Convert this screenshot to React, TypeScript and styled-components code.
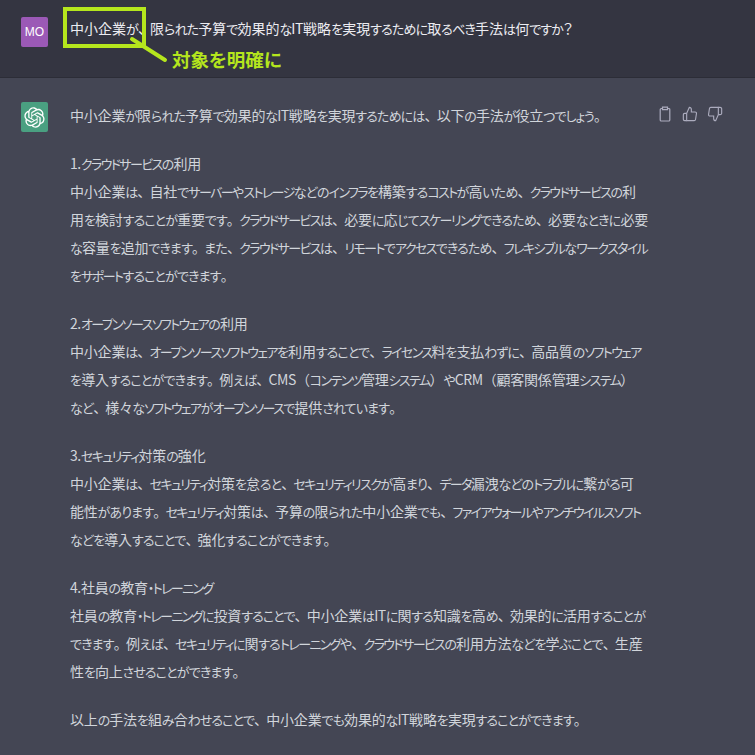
import React from "react";
import styled, { createGlobalStyle } from "styled-components";

const Global = createGlobalStyle`
  html, body { margin: 0; padding: 0; background: #444654; }
  body { width: 755px; height: 755px; overflow: hidden; font-family: "Noto Sans CJK JP", "Noto Sans", sans-serif; font-feature-settings: "palt"; }
`;
const Page = styled.div`
  width: 755px;
  height: 755px;
  overflow: hidden;
  background: #444654;
`;
const Question = styled.header`
  position: relative;
  box-sizing: border-box;
  height: 78px;
  padding: 16px 0 0 21px;
  display: flex;
  gap: 22px;
  background: #343541;
  border-bottom: 1px solid #2c2d37;
`;
const Avatar = styled.div<{ $bg: string }>`
  width: 27px;
  height: 30px;
  flex: none;
  margin-top: 1px;
  border-radius: 2px;
  background: ${(p) => p.$bg};
  color: #fff;
  display: flex;
  align-items: center;
  justify-content: center;
  font: 12px "Liberation Sans", sans-serif;
`;
const QuestionText = styled.div`
  --han-gap: 0px;
  color: #ececf1;
  font-size: 14px;
  line-height: 24px;
  white-space: nowrap;
`;
const Highlight = styled.div`
  position: absolute;
  left: 63px;
  top: 7px;
  width: 83px;
  height: 41px;
  box-sizing: border-box;
  border: 4px solid #b5e61d;
`;
const Leader = styled.svg`
  position: absolute;
  left: 125px;
  top: 30px;
`;
const Note = styled.div`
  position: absolute;
  left: 172px;
  top: 46px;
  color: #b5e61d;
  font-size: 18.5px;
  line-height: 26px;
  font-weight: 700;
  white-space: nowrap;
`;
const Answer = styled.section`
  display: flex;
  padding: 23px 0 0 21px;
  gap: 22px;
`;
const Body = styled.div`
  width: 590px;
  flex: none;
  display: flex;
  flex-direction: column;
  gap: 20px;
`;
const Para = styled.div`
  color: #d1d5db;
  font-size: 14px;
  line-height: 28px;
`;
const Line = styled.div`
  height: 28px;
  white-space: nowrap;
`;
const Run = styled.span<{ $kind: string }>`
  line-height: 0;
  ${(p) => p.$kind === "kata" && "font-size: 13px; letter-spacing: -1.6px;"}
  ${(p) => p.$kind === "hira" && "font-size: 13px; letter-spacing: -0.85px;"}
  ${(p) => p.$kind === "latin" && "letter-spacing: -0.4px;"}
  ${(p) => p.$kind === "han" && "letter-spacing: var(--han-gap, -0.2px);"}
  ${(p) => p.$kind === "punct" && "font-feature-settings: normal; letter-spacing: -1.8px;"}
  ${(p) => p.$kind === "paren" && "font-feature-settings: normal; letter-spacing: -0.2px;"}
`;
const Actions = styled.div`
  display: flex;
  gap: 9px;
  margin: 0 0 0 -25px;
  padding-top: 5px;
  color: #acacbe;
`;

const kindOf = (c: string) => {
  if (/[\u30a0-\u30ff]/.test(c)) return "kata";
  if (/[\u3040-\u309f]/.test(c)) return "hira";
  if (/[、。]/.test(c)) return "punct";
  if (/[（）]/.test(c)) return "paren";
  if (/[A-Za-z0-9.]/.test(c)) return "latin";
  return "han";
};
const toRuns = (text: string) => {
  const runs: { kind: string; text: string }[] = [];
  for (const c of text) {
    const k = kindOf(c);
    const last = runs[runs.length - 1];
    if (last && last.kind === k) last.text += c;
    else runs.push({ kind: k, text: c });
  }
  return runs;
};
const Spaced = ({ text }: { text: string }) => (
  <>
    {toRuns(text).map((r, i) => (
      <Run key={i} $kind={r.kind}>{r.text}</Run>
    ))}
  </>
);

const Logo = () => (
  <svg width="21" height="21" viewBox="0 0 41 41" fill="#fff">
    <path d="M37.5324 16.8707C37.9808 15.5241 38.1363 14.0974 37.9886 12.6859C37.8409 11.2744 37.3934 9.91076 36.676 8.68622C35.6126 6.83404 33.9882 5.3676 32.0373 4.4985C30.0864 3.62941 27.9098 3.40259 25.8215 3.85078C24.8796 2.7893 23.7219 1.94125 22.4257 1.36341C21.1295 0.785575 19.7249 0.491269 18.3058 0.500197C16.1708 0.495044 14.0893 1.16803 12.3614 2.42214C10.6335 3.67624 9.34853 5.44666 8.6917 7.47815C7.30085 7.76286 5.98686 8.3414 4.8377 9.17505C3.68854 10.0087 2.73073 11.0782 2.02839 12.312C0.956464 14.1591 0.498905 16.2988 0.721698 18.4228C0.944492 20.5467 1.83612 22.5449 3.268 24.1293C2.81966 25.4759 2.66413 26.9026 2.81182 28.3141C2.95951 29.7256 3.40701 31.0892 4.12437 32.3138C5.18791 34.1659 6.8123 35.6322 8.76321 36.5013C10.7141 37.3704 12.8907 37.5973 14.9789 37.1492C15.9208 38.2107 17.0786 39.0587 18.3747 39.6366C19.6709 40.2144 21.0755 40.5087 22.4946 40.4998C24.6307 40.5054 26.7133 39.8321 28.4418 38.5772C30.1704 37.3223 31.4556 35.5506 32.1119 33.5179C33.5027 33.2332 34.8167 32.6547 35.9659 31.821C37.115 30.9874 38.0728 29.9178 38.7752 28.684C39.8458 26.8371 40.3023 24.6979 40.0789 22.5748C39.8556 20.4517 38.9639 18.4544 37.5324 16.8707ZM22.4978 37.8849C20.7443 37.8874 19.0459 37.2733 17.6994 36.1501C17.7601 36.117 17.8666 36.0586 17.936 36.0161L25.9004 31.4156C26.1003 31.3019 26.2663 31.137 26.3813 30.9378C26.4964 30.7386 26.5563 30.5124 26.5549 30.2825V19.0542L29.9213 20.998C29.9389 21.0068 29.9541 21.0198 29.9656 21.0359C29.977 21.052 29.9842 21.0707 29.9867 21.0902V30.3889C29.9842 32.375 29.1946 34.2791 27.7909 35.6841C26.3872 37.0892 24.4838 37.8806 22.4978 37.8849ZM6.39227 31.0064C5.51397 29.4888 5.19742 27.7107 5.49804 25.9832C5.55718 26.0187 5.66048 26.0818 5.73461 26.1244L13.699 30.7248C13.8975 30.8408 14.1233 30.902 14.3532 30.902C14.583 30.902 14.8088 30.8408 15.0073 30.7248L24.731 25.1103V28.9979C24.7321 29.0177 24.7283 29.0376 24.7199 29.0556C24.7115 29.0736 24.6988 29.0893 24.6829 29.1012L16.6317 33.7497C14.9096 34.7416 12.8643 35.0097 10.9447 34.4954C9.02506 33.9811 7.38785 32.7263 6.39227 31.0064ZM4.29707 13.6194C5.17156 12.0998 6.55279 10.9364 8.19885 10.3327C8.19885 10.4013 8.19491 10.5228 8.19491 10.6071V19.808C8.19351 20.0378 8.25334 20.2638 8.36823 20.4629C8.48312 20.6619 8.64893 20.8267 8.84863 20.9404L18.5723 26.5542L15.206 28.4979C15.1894 28.5089 15.1703 28.5155 15.1505 28.5173C15.1307 28.5191 15.1107 28.516 15.0924 28.5082L7.04046 23.8557C5.32135 22.8601 4.06716 21.2235 3.55289 19.3046C3.03862 17.3858 3.30624 15.3413 4.29707 13.6194ZM31.955 20.0556L22.2312 14.4411L25.5976 12.4981C25.6142 12.4872 25.6333 12.4805 25.6531 12.4787C25.6729 12.4769 25.6928 12.4801 25.7111 12.4879L33.7631 17.1364C34.9967 17.849 36.0017 18.8982 36.6606 20.1613C37.3194 21.4244 37.6047 22.849 37.4832 24.2684C37.3617 25.6878 36.8382 27.0432 35.9743 28.1759C35.1103 29.3086 33.9415 30.1717 32.6047 30.6641C32.6047 30.5947 32.6047 30.4733 32.6047 30.3889V21.188C32.6066 20.9586 32.5474 20.7328 32.4332 20.5338C32.319 20.3348 32.154 20.1698 31.955 20.0556ZM35.3055 15.0128C35.2464 14.9765 35.1431 14.9142 35.069 14.8717L27.1045 10.2712C26.906 10.1554 26.6803 10.0943 26.4504 10.0943C26.2206 10.0943 25.9948 10.1554 25.7963 10.2712L16.0726 15.8858V11.9982C16.0715 11.9783 16.0753 11.9585 16.0837 11.9405C16.0921 11.9225 16.1048 11.9068 16.1207 11.8949L24.1719 7.25025C25.4053 6.53903 26.8158 6.19376 28.2383 6.25482C29.6608 6.31589 31.0364 6.78077 32.2044 7.59508C33.3723 8.40939 34.2842 9.53945 34.8334 10.8531C35.3826 12.1667 35.5464 13.6095 35.3055 15.0128ZM14.2424 21.9419L10.8752 19.9981C10.8576 19.9893 10.8423 19.9763 10.8309 19.9602C10.8195 19.9441 10.8122 19.9254 10.8098 19.9058V10.6071C10.8107 9.18295 11.2173 7.78848 11.9819 6.58696C12.7466 5.38544 13.8377 4.42659 15.1275 3.82264C16.4173 3.21869 17.8524 2.99464 19.2649 3.1767C20.6775 3.35876 22.0089 3.93941 23.1034 4.85067C23.0427 4.88379 22.937 4.94215 22.8668 4.98473L14.9024 9.58517C14.7025 9.69878 14.5366 9.86356 14.4215 10.0626C14.3065 10.2616 14.2466 10.4877 14.2479 10.7175L14.2424 21.9419ZM16.071 17.9991L20.4018 15.4978L24.7325 17.9975V22.9985L20.4018 25.4983L16.071 22.9985V17.9991Z" />
  </svg>
);

const paragraphs = [
  ["中小企業が限られた予算で効果的なIT戦略を実現するためには、以下の手法が役立つでしょう。"],
  ["1.クラウドサービスの利用", "中小企業は、自社でサーバーやストレージなどのインフラを構築するコストが高いため、クラウドサービスの利", "用を検討することが重要です。クラウドサービスは、必要に応じてスケーリングできるため、必要なときに必要", "な容量を追加できます。また、クラウドサービスは、リモートでアクセスできるため、フレキシブルなワークスタイル", "をサポートすることができます。"],
  ["2.オープンソースソフトウェアの利用", "中小企業は、オープンソースソフトウェアを利用することで、ライセンス料を支払わずに、高品質のソフトウェア", "を導入することができます。例えば、CMS（コンテンツ管理システム）やCRM（顧客関係管理システム）", "など、様々なソフトウェアがオープンソースで提供されています。"],
  ["3.セキュリティ対策の強化", "中小企業は、セキュリティ対策を怠ると、セキュリティリスクが高まり、データ漏洩などのトラブルに繋がる可", "能性があります。セキュリティ対策は、予算の限られた中小企業でも、ファイアウォールやアンチウイルスソフト", "などを導入することで、強化することができます。"],
  ["4.社員の教育・トレーニング", "社員の教育・トレーニングに投資することで、中小企業はITに関する知識を高め、効果的に活用することが", "できます。例えば、セキュリティに関するトレーニングや、クラウドサービスの利用方法などを学ぶことで、生産", "性を向上させることができます。"],
  ["以上の手法を組み合わせることで、中小企業でも効果的なIT戦略を実現することができます。"],
];

export default function App() {
  return (
    <Page>
      <Global />
      <Question>
        <Avatar $bg="#9b59b6">MO</Avatar>
        <QuestionText><Spaced text="中小企業が、限られた予算で効果的なIT戦略を実現するために取るべき手法は何ですか？" /></QuestionText>
        <Highlight />
        <Leader width="46" height="36" viewBox="0 0 46 36">
          <path d="M7 9L40 30" stroke="#b5e61d" strokeWidth="4" strokeLinecap="round" />
        </Leader>
        <Note>対象を明確に</Note>
      </Question>
      <Answer>
        <Avatar $bg="#4aa081"><Logo /></Avatar>
        <Body>
          {paragraphs.map((lines, i) => (
            <Para key={i}>
              {lines.map((t, j) => (
                <Line key={j}><Spaced text={t} /></Line>
              ))}
            </Para>
          ))}
        </Body>
        <Actions>
          <svg width="16" height="16" viewBox="0 0 16 16" fill="none" stroke="currentColor" strokeWidth="1.2"><path d="M5.5 2.5H4.2a1 1 0 0 0-1 1V14a1 1 0 0 0 1 1h7.6a1 1 0 0 0 1-1V3.5a1 1 0 0 0-1-1h-1.3" /><path d="M5.5 1.2h5v2.4h-5z" /></svg>
          <svg width="16" height="16" viewBox="0 0 24 24" fill="none" stroke="currentColor" strokeWidth="1.7"><path d="M14 9V5a3 3 0 0 0-3-3l-4 9v11h11.3a2 2 0 0 0 2-1.7l1.4-9a2 2 0 0 0-2-2.3z" /><path d="M7 22H4a2 2 0 0 1-2-2v-7a2 2 0 0 1 2-2h3" /></svg>
          <svg width="16" height="16" viewBox="0 0 24 24" fill="none" stroke="currentColor" strokeWidth="1.7"><path d="M10 15v4a3 3 0 0 0 3 3l4-9V2H5.7a2 2 0 0 0-2 1.7l-1.4 9a2 2 0 0 0 2 2.3z" /><path d="M17 2h2.7A2.3 2.3 0 0 1 22 4v7a2.3 2.3 0 0 1-2.3 2H17" /></svg>
        </Actions>
      </Answer>
    </Page>
  );
}
